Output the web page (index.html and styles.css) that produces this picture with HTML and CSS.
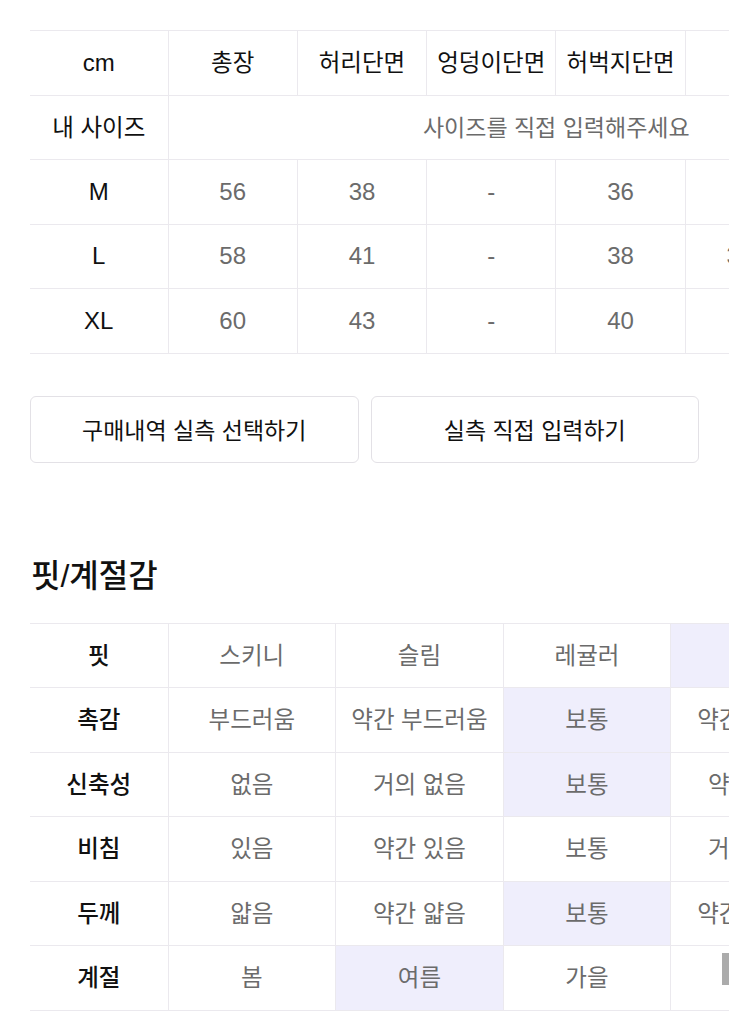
FILE: index.html
```html
<!DOCTYPE html>
<html lang="ko">
<head>
<meta charset="utf-8">
<title>사이즈</title>
<link rel="stylesheet" href="styles.css">
</head>
<body>
<div class="page">
  <div class="table-scroll">
    <table class="grid size-table">
      <colgroup><col class="c-label"><col class="c-size" span="6"></colgroup>
      <tr class="head">
        <td class="lbl en">cm</td><td>총장</td><td>허리단면</td><td>엉덩이단면</td><td>허벅지단면</td><td>밑위</td><td>밑단단면</td>
      </tr>
      <tr>
        <td class="lbl">내 사이즈</td><td class="val ph" colspan="6">사이즈를 직접 입력해주세요</td>
      </tr>
      <tr>
        <td class="lbl en">M</td><td class="val en">56</td><td class="val en">38</td><td class="val en">-</td><td class="val en">36</td><td class="val en">31</td><td class="val en">22</td>
      </tr>
      <tr>
        <td class="lbl en">L</td><td class="val en">58</td><td class="val en">41</td><td class="val en">-</td><td class="val en">38</td><td class="val en">32.5</td><td class="val en">23</td>
      </tr>
      <tr>
        <td class="lbl en">XL</td><td class="val en">60</td><td class="val en">43</td><td class="val en">-</td><td class="val en">40</td><td class="val en">34</td><td class="val en">24</td>
      </tr>
    </table>
  </div>

  <div class="actions">
    <button class="btn" type="button">구매내역 실측 선택하기</button>
    <button class="btn" type="button">실측 직접 입력하기</button>
  </div>

  <h2 class="section-title">핏/계절감</h2>

  <div class="table-scroll">
    <table class="grid fit-table">
      <colgroup><col class="c-label"><col class="c-fit" span="5"></colgroup>
      <tr><td class="lbl">핏</td><td class="val">스키니</td><td class="val">슬림</td><td class="val">레귤러</td><td class="val on">루즈</td><td class="val">오버사이즈</td></tr>
      <tr><td class="lbl">촉감</td><td class="val">부드러움</td><td class="val">약간 부드러움</td><td class="val on">보통</td><td class="val">약간 뻣뻣함</td><td class="val">뻣뻣함</td></tr>
      <tr><td class="lbl">신축성</td><td class="val">없음</td><td class="val">거의 없음</td><td class="val on">보통</td><td class="val">약간 있음</td><td class="val">있음</td></tr>
      <tr><td class="lbl">비침</td><td class="val">있음</td><td class="val">약간 있음</td><td class="val">보통</td><td class="val">거의 없음</td><td class="val">없음</td></tr>
      <tr><td class="lbl">두께</td><td class="val">얇음</td><td class="val">약간 얇음</td><td class="val on">보통</td><td class="val">약간 두꺼움</td><td class="val">두꺼움</td></tr>
      <tr><td class="lbl">계절</td><td class="val">봄</td><td class="val on">여름</td><td class="val">가을</td><td class="val"></td><td class="val">겨울</td></tr>
    </table>
    <div class="scroll-thumb"></div>
  </div>
</div>
</body>
</html>
```
FILE: styles.css
```css
* { box-sizing: border-box; }

html, body {
  margin: 0;
  padding: 0;
  background: #fff;
}

body {
  font-family: "Liberation Sans", "Noto Sans CJK KR", sans-serif;
  color: #111;
  overflow: hidden;
}

.page {
  padding: 30px 30px 0 30px;
}

.table-scroll {
  position: relative;
  overflow: hidden;
  margin-right: -30px;
}

.grid {
  border-collapse: collapse;
  table-layout: fixed;
}

.size-table { width: 914px; }
.fit-table { width: 976px; }

.c-label { width: 138px; }
.c-size { width: 129.3px; }
.c-fit { width: 167.6px; }

.grid td {
  height: 64.5px;
  padding: 2px 0 0 0;
  text-align: center;
  vertical-align: middle;
  white-space: nowrap;
  font-size: 23.5px;
  line-height: 1;
  font-weight: 400;
  border-top: 1px solid #ebe9ee;
  border-bottom: 1px solid #ebe9ee;
  border-left: 1px solid #ebe9ee;
}

.grid td:first-child { border-left: none; }

.grid .lbl {
  color: #111;
}

.fit-table .lbl {
  font-weight: 500;
}

.size-table .head td { color: #111; }

.grid .val {
  color: #6b6b6b;
}

.grid .ph {
  font-size: 23px;
}

.grid .en {
  font-size: 24px;
  padding-top: 0;
}

.grid .on {
  background: #efeefc;
}

.actions {
  display: flex;
  gap: 12px;
  margin-top: 42px;
}

.btn {
  flex: 1;
  height: 67px;
  background: #fff;
  border: 1px solid #e3e1e6;
  border-radius: 6px;
  font-family: "Liberation Sans", "Noto Sans CJK KR", sans-serif;
  font-size: 23px;
  color: #111;
  padding: 0;
}

.section-title {
  margin: 93px 0 27px 1px;
  font-size: 32px;
  line-height: 40px;
  font-weight: 500;
  color: #111;
}

.scroll-thumb {
  position: absolute;
  right: 0;
  top: 330px;
  width: 7px;
  height: 32px;
  background: #ababab;
}
```
